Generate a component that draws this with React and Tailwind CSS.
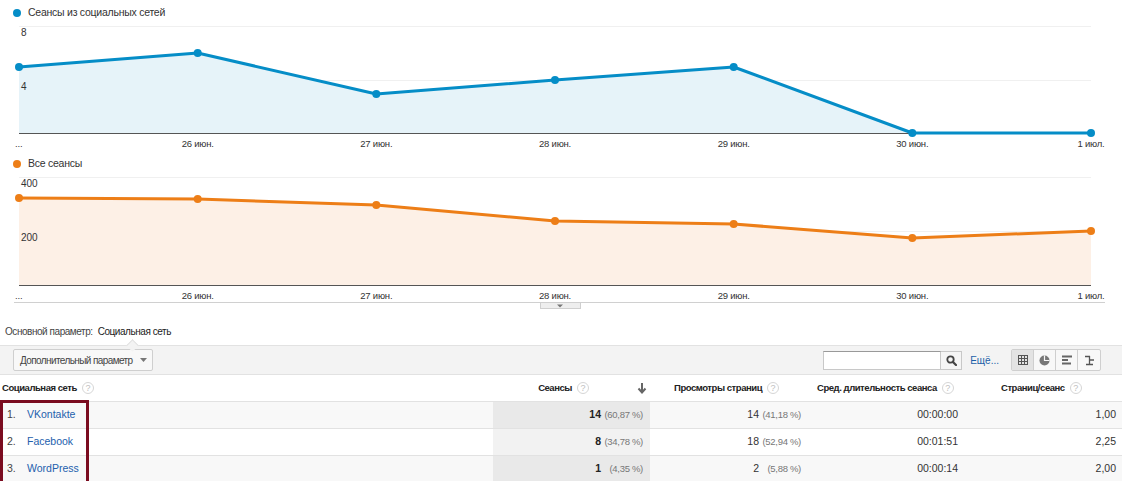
import React from "react";

const XS = [19, 197.7, 376.3, 555, 733.7, 912.3, 1091];
const DATES = ["...", "26 июн.", "27 июн.", "28 июн.", "29 июн.", "30 июн.", "1 июл."];

const Chart = ({ color, fill, ys, ticks, base, height, labelY, rule }) => {
  const pts = XS.map((x, i) => `${x},${ys[i]}`);
  const area = `M19,${base} L${pts.join(" L")} L1091,${base} Z`;
  return (
    <svg width="1122" height={height} className="block" style={{ fontFamily: "'Liberation Sans', Arial, sans-serif" }}>
      <line x1="19" x2="1091" y1="0.5" y2="0.5" stroke="#f0f0f0" />
      <line x1="19" x2="1091" y1="54.5" y2="54.5" stroke="#f0f0f0" />
      <path d={area} fill={fill} />
      <line x1="19" x2="1091" y1={base + 0.5} y2={base + 0.5} stroke="#555" />
      <polyline points={pts.join(" ")} fill="none" stroke={color} strokeWidth="3" strokeLinejoin="round" />
      {XS.map((x, i) => (
        <circle key={i} cx={x} cy={ys[i]} r="4" fill={color} />
      ))}
      <text x="21" y="10" fontSize="10" fill="#333">{ticks[0]}</text>
      <text x="21" y="64" fontSize="10" fill="#333">{ticks[1]}</text>
      {DATES.map((d, i) => (
        <text key={d} x={i === 0 ? 15 : XS[i]} y={labelY} fontSize="9.5" letterSpacing="-0.2" fill="#333" textAnchor={i === 0 ? "start" : "middle"}>
          {d}
        </text>
      ))}
      {rule && (
        <g>
          <line x1="14" x2="1105" y1="125.5" y2="125.5" stroke="#d0d0d0" />
          <rect x="540.5" y="125.5" width="40" height="6" fill="#eeeeee" stroke="#cfcfcf" />
          <path d="M557 127.5 L563 127.5 L560 130.5 Z" fill="#777" />
        </g>
      )}
    </svg>
  );
};

const Help = () => (
  <span className="inline-flex items-center justify-center w-[12px] h-[12px] shrink-0 rounded-full border border-[#d6d6d6] text-[9px] leading-none text-[#c0c0c0] font-normal tracking-normal ml-[5px]">
    ?
  </span>
);

const rows = [
  { n: "1.", name: "VKontakte", s: "14", sp: "(60,87 %)", v: "14", vp: "(41,18 %)", d: "00:00:00", p: "1,00", bg: "bg-[#f8f8f8]", sbg: "bg-[#e9e9e9]" },
  { n: "2.", name: "Facebook", s: "8", sp: "(34,78 %)", v: "18", vp: "(52,94 %)", d: "00:01:51", p: "2,25", bg: "bg-white", sbg: "bg-[#f2f2f2]" },
  { n: "3.", name: "WordPress", s: "1", sp: "(4,35 %)", v: "2", vp: "(5,88 %)", d: "00:00:14", p: "2,00", bg: "bg-[#f8f8f8]", sbg: "bg-[#e9e9e9]" },
];

const cols = "grid grid-cols-[493px_157px_160px_150px_1fr]";

export default function App() {
  return (
    <div className="relative w-[1122px] h-[481px] overflow-hidden bg-white text-[10.5px] text-[#333] whitespace-nowrap font-['Liberation_Sans',Arial,sans-serif]">
      {/* chart 1 */}
      <div className="h-[26px] flex items-center pl-[13px] gap-[7px] tracking-[-0.25px]">
        <span className="w-[8px] h-[8px] rounded-full bg-[#058dc7]" />
        <span>Сеансы из социальных сетей</span>
      </div>
      <Chart color="#058dc7" fill="#e6f3f9" ys={[41, 27, 68, 54, 41, 107, 107]} ticks={["8", "4"]} base={107} height={124} labelY={121} />

      {/* chart 2 */}
      <div className="h-[27px] flex items-center pl-[13px] gap-[7px] tracking-[-0.25px]">
        <span className="w-[8px] h-[8px] rounded-full bg-[#ed7e17]" />
        <span>Все сеансы</span>
      </div>
      <Chart color="#ed7e17" fill="#fdf0e6" ys={[21, 22, 28, 44, 47, 61, 54]} ticks={["400", "200"]} base={108} height={133} labelY={122} rule />

      {/* primary dimension */}
      <div className="relative h-[35px] flex items-end pb-[6px] pl-[5px] gap-[5px] text-[10px] tracking-[-0.45px]">
        <span className="text-[#444]">Основной параметр:</span>
        <span className="text-[#222]">Социальная сеть</span>
        <span className="absolute left-[128px] bottom-[-5px] w-[9px] h-[9px] rotate-45 bg-[#f3f3f3] border-l border-t border-[#e0e0e0]" />
      </div>

      {/* toolbar */}
      <div className="h-[30px] bg-[#f3f3f3] border-t border-b border-[#e2e2e2] flex items-center pl-[13px] pr-[21px]">
        <div className="h-[22px] w-[140px] flex items-center justify-between pl-[6px] pr-[5px] border border-[#cfcfcf] rounded-[2px] bg-[#f8f8f8] text-[#444] text-[10px] tracking-[-0.6px]">
          <span>Дополнительный параметр</span>
          <svg width="7" height="4"><path d="M0 0 L7 0 L3.5 4 Z" fill="#777" /></svg>
        </div>
        <div className="ml-auto flex items-center">
          <div className="w-[118px] h-[19px] bg-white border border-[#c8c8c8] border-t-[#999]" />
          <div className="w-[21px] h-[19px] bg-[#f5f5f5] border border-l-0 border-[#c8c8c8] flex items-center justify-center">
            <svg width="11" height="11">
              <circle cx="4.5" cy="4.5" r="3.2" fill="none" stroke="#444" strokeWidth="1.8" />
              <path d="M7 7 L10 10" stroke="#444" strokeWidth="2.2" strokeLinecap="round" />
            </svg>
          </div>
          <span className="ml-[8px] text-[#1a5fa8] text-[10px]">Ещё...</span>
          <div className="ml-[12px] flex h-[22px] border border-[#cfcfcf] rounded-[2px] bg-[#f8f8f8]">
            <div className="w-[22px] flex items-center justify-center bg-[#e3e3e3] border-r border-[#cfcfcf]">
              <svg width="10" height="10">
                <rect x="0.5" y="0.5" width="9" height="9" fill="none" stroke="#555" />
                <path d="M3.5 0 V10 M6.5 0 V10 M0 3.5 H10 M0 6.5 H10" stroke="#555" />
              </svg>
            </div>
            <div className="w-[22px] flex items-center justify-center border-r border-[#cfcfcf]">
              <svg width="11" height="11">
                <circle cx="5.5" cy="5.5" r="5" fill="#777" />
                <path d="M5.5 0.5 V5.5 H10.5" fill="none" stroke="#f8f8f8" strokeWidth="1.2" />
              </svg>
            </div>
            <div className="w-[22px] flex items-center justify-center border-r border-[#cfcfcf]">
              <svg width="10" height="10">
                <path d="M0 1.5 H10 M0 5 H6 M0 8.5 H9" stroke="#666" strokeWidth="2" />
              </svg>
            </div>
            <div className="w-[22px] flex items-center justify-center">
              <svg width="11" height="11">
                <path d="M1 1.5 H6 M5.5 1 V10 M5.5 5 H10 M2 9.5 H9" stroke="#555" strokeWidth="1.3" fill="none" />
              </svg>
            </div>
          </div>
        </div>
      </div>

      {/* table header */}
      <div className={`${cols} h-[27px] items-center border-b border-[#e2e2e2] font-bold text-[9.5px] tracking-[-0.45px] text-[#222]`}>
        <div className="pl-[2px] flex items-center">Социальная сеть<Help /></div>
        <div className="flex items-center justify-end pr-[3px]">
          <span>Сеансы</span>
          <Help />
          <svg width="10" height="11" className="ml-[48px]">
            <path d="M5 0 V9 M1.5 5.5 L5 9.5 L8.5 5.5" fill="none" stroke="#666" strokeWidth="2" />
          </svg>
        </div>
        <div className="pl-[24px] flex items-center">Просмотры страниц<Help /></div>
        <div className="pl-[7px] flex items-center">Сред. длительность сеанса<Help /></div>
        <div className="pl-[41px] flex items-center">Страниц/сеанс<Help /></div>
      </div>

      {/* rows */}
      {rows.map((r) => (
        <div key={r.n} className={`${cols} h-[27px] items-center border-b border-[#e2e2e2] ${r.bg}`}>
          <div className="pl-[7px] flex items-center">
            <span className="w-[20px] text-[#444]">{r.n}</span>
            <span className="text-[#2360ad]">{r.name}</span>
          </div>
          <div className={`h-full flex items-center justify-end pr-[7px] ${r.sbg}`}>
            <span className="font-bold text-[#222]">{r.s}</span>
            <span className="w-[42px] text-right text-[9.5px] tracking-[-0.3px] text-[#777]">{r.sp}</span>
          </div>
          <div className="flex items-center justify-end pr-[9px]">
            <span className="text-[#333]">{r.v}</span>
            <span className="w-[42px] text-right text-[9.5px] tracking-[-0.3px] text-[#777]">{r.vp}</span>
          </div>
          <div className="text-right pr-[2px]">{r.d}</div>
          <div className="text-right pr-[6px]">{r.p}</div>
        </div>
      ))}

      {/* highlight box */}
      <div className="absolute left-0 top-[400px] w-[89px] h-[84px] border-[3px] border-[#7b0c20]" />
    </div>
  );
}
